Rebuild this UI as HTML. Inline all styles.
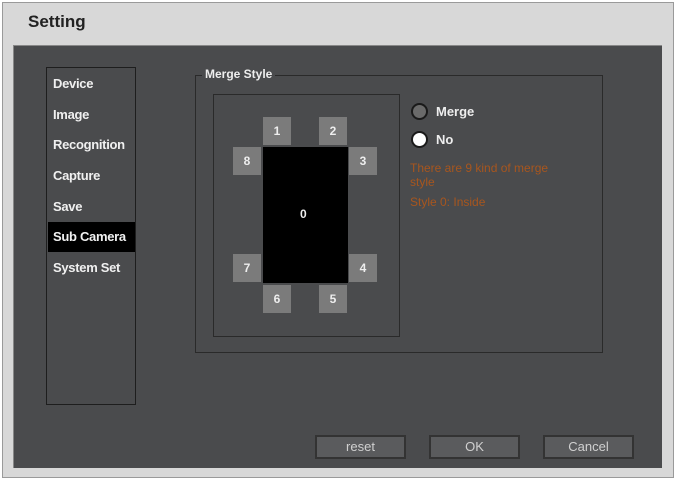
<!DOCTYPE html>
<html><head><style>
body{margin:0;width:678px;height:481px;background:#fff;position:relative;font-family:"Liberation Sans",sans-serif;overflow:hidden}
.a{position:absolute}
.frame{left:2px;top:2px;width:672px;height:476px;background:#d8d8d8;border:1px solid #9a9a9a;box-sizing:border-box}
.dark{left:13px;top:45px;width:648px;height:422px;background:#4a4b4d;border-top:1px solid #888;border-left:1px solid #888}
.side{left:46px;top:67px;width:90px;height:338px;border:1px solid #1e1e1e;box-sizing:border-box;background:#4a4b4d}
.it{position:absolute;left:6px;color:#f0f0f0;font-size:13px;font-weight:bold;letter-spacing:-0.3px}
.sq{position:absolute;width:28px;height:28px;background:#7b7b7b;color:#eee;font-size:12px;text-align:center;line-height:28px;font-weight:bold}
.btn{position:absolute;top:435px;width:91px;height:24px;background:#5a5b5d;border:2px solid #333;box-sizing:border-box;color:#d0d0d0;font-size:13px;text-align:center;line-height:20px}
.or{color:#a8561e;font-size:12px}
</style></head><body>
<div class="a frame"></div>
<div class="a" style="left:28px;top:12px;font-size:17px;font-weight:bold;color:#222">Setting</div>
<div class="a dark"></div>
<div class="a side">
<div class="it" style="top:8px">Device</div>
<div class="it" style="top:39px">Image</div>
<div class="it" style="top:69px">Recognition</div>
<div class="it" style="top:100px">Capture</div>
<div class="it" style="top:131px">Save</div>
<div style="position:absolute;left:1px;top:154px;width:87px;height:30px;background:#000"></div>
<div class="it" style="top:161px">Sub Camera</div>
<div class="it" style="top:192px">System Set</div>
</div>
<div class="a" style="left:195px;top:75px;width:408px;height:278px;border:1px solid #2a2a2a;box-sizing:border-box"></div>
<div class="a" style="left:202px;top:67px;padding:0 3px;background:#4a4b4d;color:#eee;font-size:12px;font-weight:bold">Merge Style</div>
<div class="a" style="left:213px;top:94px;width:187px;height:243px;border:1px solid #2a2a2a;box-sizing:border-box"></div>
<div class="a" style="left:263px;top:147px;width:85px;height:136px;background:#000"></div>
<div class="a" style="left:300px;top:207px;color:#eee;font-size:12px;font-weight:bold">0</div>
<div class="sq" style="left:263px;top:117px">1</div>
<div class="sq" style="left:319px;top:117px">2</div>
<div class="sq" style="left:233px;top:147px">8</div>
<div class="sq" style="left:349px;top:147px">3</div>
<div class="sq" style="left:233px;top:254px">7</div>
<div class="sq" style="left:349px;top:254px">4</div>
<div class="sq" style="left:263px;top:285px">6</div>
<div class="sq" style="left:319px;top:285px">5</div>
<div class="a" style="left:411px;top:103px;width:13px;height:13px;border-radius:50%;background:#6a6a6a;border:2px solid #1a1a1a"></div>
<div class="a" style="left:436px;top:104px;color:#eee;font-size:13px;font-weight:bold">Merge</div>
<div class="a" style="left:411px;top:131px;width:13px;height:13px;border-radius:50%;background:#fff;border:2px solid #1a1a1a"></div>
<div class="a" style="left:436px;top:132px;color:#eee;font-size:13px;font-weight:bold">No</div>
<div class="a or" style="left:410px;top:161px;line-height:14px">There are 9 kind of merge<br>style</div>
<div class="a or" style="left:410px;top:195px">Style 0: Inside</div>
<div class="btn" style="left:315px">reset</div>
<div class="btn" style="left:429px">OK</div>
<div class="btn" style="left:543px">Cancel</div>
</body></html>
